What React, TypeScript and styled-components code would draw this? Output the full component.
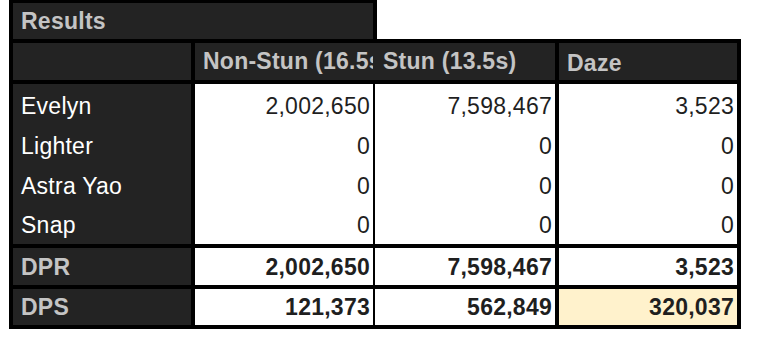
import React from 'react';
import styled, { createGlobalStyle } from 'styled-components';

type Edge = 'thick' | 'thin' | 'hidden';

const GlobalStyle = createGlobalStyle`
  body {
    margin: 0;
    background: #ffffff;
  }
`;

const Sheet = styled.section`
  display: flex;
  flex-direction: column;
  align-items: flex-start;
  margin-left: 9px;
  font-family: 'Liberation Sans', Arial, sans-serif;
  font-size: 23px;
  letter-spacing: 0.25px;
`;

const TitleRow = styled.div`
  display: flex;
  align-items: center;
  box-sizing: border-box;
  width: 368px;
  height: 39px;
  padding: 0 8px;
  background: #232323;
  border: 4px solid #000;
  border-top-width: 3px;
  border-bottom: none;
  color: #c4c4c4;
  font-weight: 700;
`;

const Row = styled.div<{ $height: number; $top?: boolean; $bottom?: boolean }>`
  display: grid;
  grid-template-columns: 182px 182px 182px 186px;
  box-sizing: border-box;
  width: 732px;
  height: ${(p) => p.$height + (p.$top ? 4 : 0) + (p.$bottom ? 4 : 0)}px;
  border-top: ${(p) => (p.$top ? '4px solid #000' : 'none')};
  border-bottom: ${(p) => (p.$bottom ? '4px solid #000' : 'none')};
`;

const Cell = styled.div<{
  $edge: Edge;
  $last?: boolean;
  $numeric?: boolean;
  $head?: boolean;
  $bold?: boolean;
  $bg?: string;
  $drop?: number;
}>`
  display: flex;
  align-items: center;
  justify-content: ${(p) => (p.$numeric ? 'flex-end' : 'flex-start')};
  box-sizing: border-box;
  min-width: 0;
  overflow: hidden;
  white-space: nowrap;
  padding: ${(p) => p.$drop ?? 0}px ${(p) => (p.$numeric ? 3 : 4)}px 0
    ${(p) => (p.$edge === 'thick' ? 8 : 6)}px;
  background: ${(p) => p.$bg ?? (p.$head ? '#232323' : '#ffffff')};
  border-left: ${(p) => (p.$edge === 'thin' ? 2 : 4)}px solid
    ${(p) => (p.$edge === 'hidden' ? '#232323' : '#000')};
  border-right: ${(p) => (p.$last ? '4px solid #000' : 'none')};
  color: ${(p) => (p.$head ? '#c4c4c4' : '#1f1f1f')};
  font-weight: ${(p) => (p.$bold ? 700 : 400)};
`;

const NameCell = styled(Cell)`
  color: #ffffff;
`;

const players = [
  { name: 'Evelyn', values: ['2,002,650', '7,598,467', '3,523'], drop: 4 },
  { name: 'Lighter', values: ['0', '0', '0'], drop: 5 },
  { name: 'Astra Yao', values: ['0', '0', '0'], drop: 5 },
  { name: 'Snap', values: ['0', '0', '0'], drop: 3 },
];

const totals = [
  { label: 'DPR', values: ['2,002,650', '7,598,467', '3,523'], height: 37, drop: 1 },
  { label: 'DPS', values: ['121,373', '562,849', '320,037'], height: 36, drop: 0 },
];

const edges: Edge[] = ['thick', 'thin', 'thick'];

const App: React.FC = () => {
  return (
    <>
      <GlobalStyle />
      <Sheet>
        <TitleRow>Results</TitleRow>
        <Row $height={37} $top $bottom>
          <Cell $edge="thick" $head />
          <Cell $edge="thick" $head $bold>
            Non-Stun (16.5s)
          </Cell>
          <Cell $edge="hidden" $head $bold>
            Stun (13.5s)
          </Cell>
          <Cell $edge="thick" $last $head $bold $drop={4}>
            Daze
          </Cell>
        </Row>
        {players.map((player) => (
          <Row key={player.name} $height={40}>
            <NameCell $edge="thick" $head $drop={player.drop}>
              {player.name}
            </NameCell>
            {player.values.map((value, i) => (
              <Cell key={i} $edge={edges[i]} $last={i === 2} $numeric $drop={player.drop}>
                {value}
              </Cell>
            ))}
          </Row>
        ))}
        {totals.map((total, r) => (
          <Row key={total.label} $height={total.height} $top={r === 0} $bottom>
            <Cell $edge="thick" $head $bold $drop={total.drop}>
              {total.label}
            </Cell>
            {total.values.map((value, i) => (
              <Cell
                key={i}
                $edge={edges[i]}
                $last={i === 2}
                $numeric
                $bold
                $drop={total.drop}
                $bg={total.label === 'DPS' && i === 2 ? '#fff2cc' : undefined}
              >
                {value}
              </Cell>
            ))}
          </Row>
        ))}
      </Sheet>
    </>
  );
};

export default App;
